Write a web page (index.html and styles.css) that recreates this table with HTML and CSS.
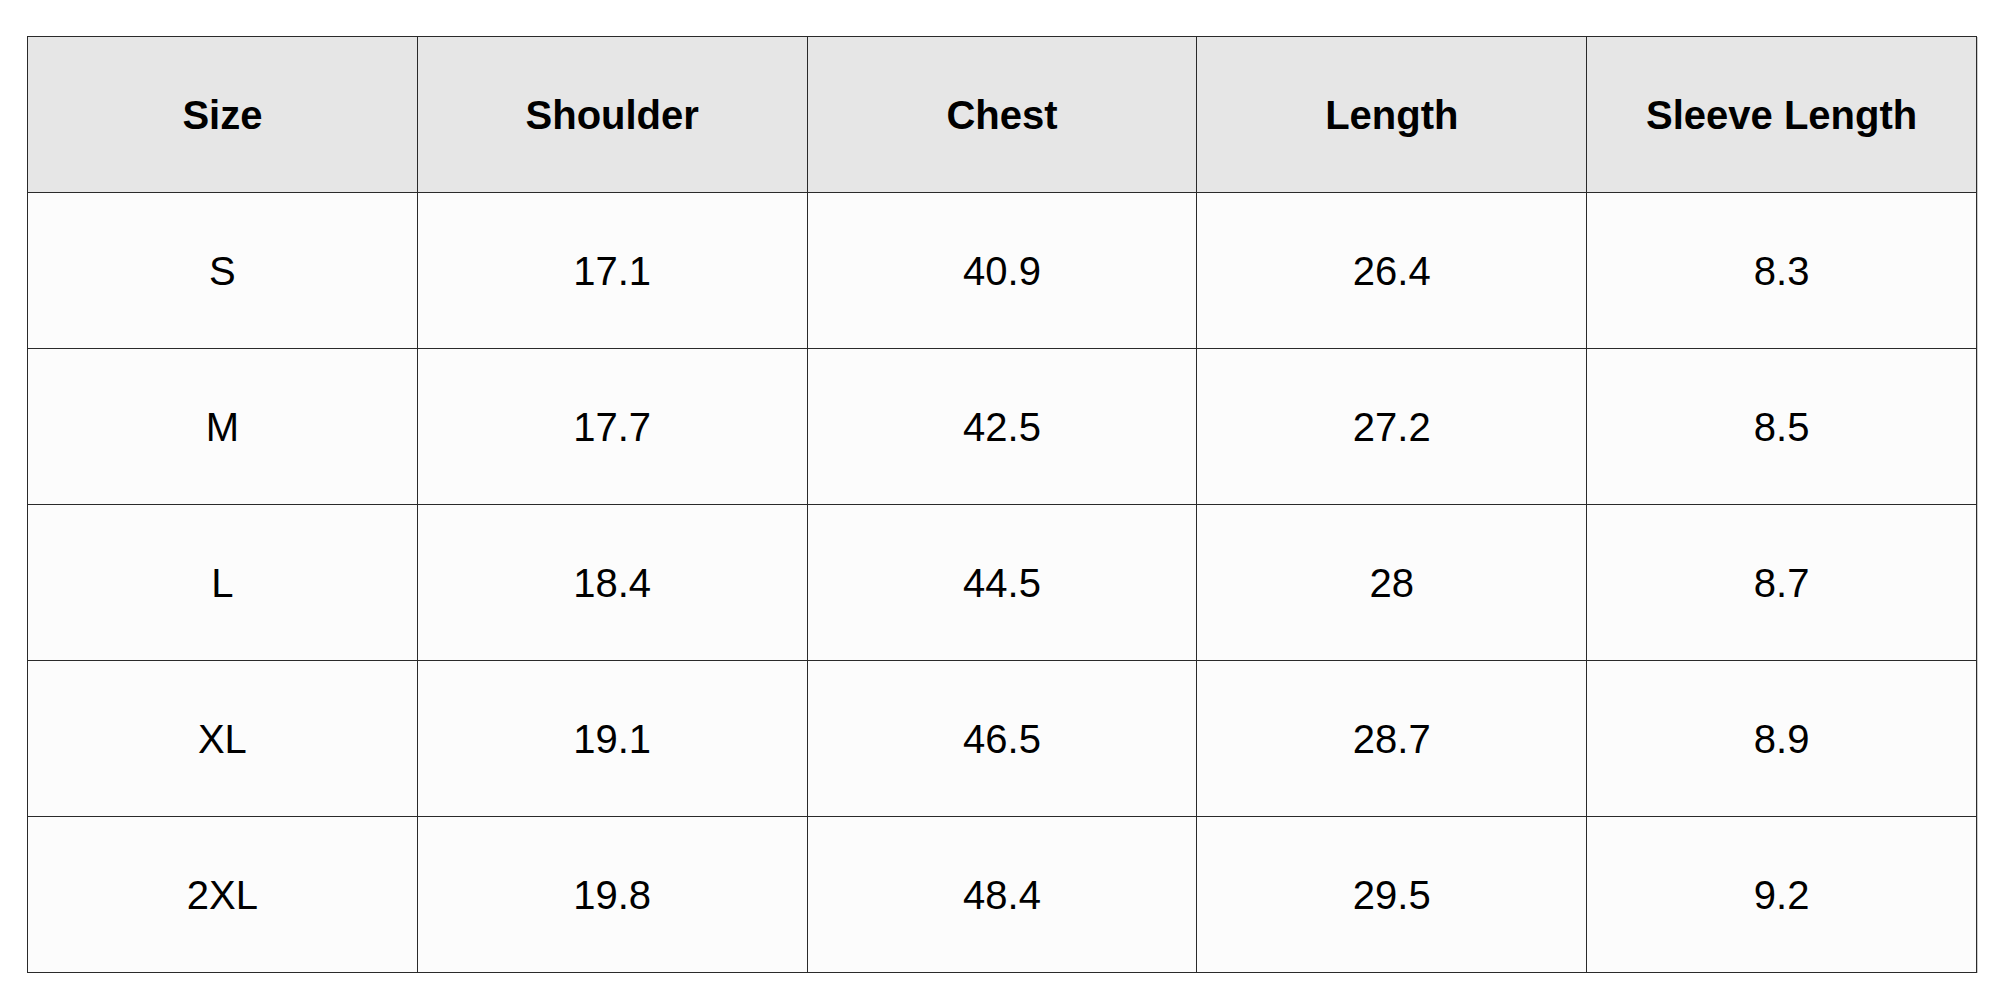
FILE: index.html
```html
<!DOCTYPE html>
<html lang="en">
<head>
<meta charset="utf-8">
<title>Size Chart</title>
<link rel="stylesheet" href="styles.css">
</head>
<body>
<table class="size-table">
  <thead>
    <tr><th>Size</th><th>Shoulder</th><th>Chest</th><th>Length</th><th>Sleeve Length</th></tr>
  </thead>
  <tbody>
    <tr><td>S</td><td>17.1</td><td>40.9</td><td>26.4</td><td>8.3</td></tr>
    <tr><td>M</td><td>17.7</td><td>42.5</td><td>27.2</td><td>8.5</td></tr>
    <tr><td>L</td><td>18.4</td><td>44.5</td><td>28</td><td>8.7</td></tr>
    <tr><td>XL</td><td>19.1</td><td>46.5</td><td>28.7</td><td>8.9</td></tr>
    <tr><td>2XL</td><td>19.8</td><td>48.4</td><td>29.5</td><td>9.2</td></tr>
  </tbody>
</table>
</body>
</html>
```
FILE: styles.css
```css
html, body {
  margin: 0;
  padding: 0;
  background: #ffffff;
}
body {
  padding: 36px 0 0 27px;
  font-family: "Liberation Sans", Arial, sans-serif;
  color: #000000;
}
.size-table {
  border-collapse: collapse;
  table-layout: fixed;
  width: 1950px;
  border: 1px solid #555555;
  box-shadow: 1px 1px 0 #cccccc;
}
.size-table tr {
  height: 156px;
}
.size-table th,
.size-table td {
  border: 1px solid #2a2a2a;
  padding: 0;
  text-align: center;
  vertical-align: middle;
  font-size: 40px;
  line-height: 1;
}
.size-table th {
  background: #e6e6e6;
  font-weight: bold;
  color: #000000;
}
.size-table td {
  background: #fcfcfc;
  font-weight: normal;
}
```
